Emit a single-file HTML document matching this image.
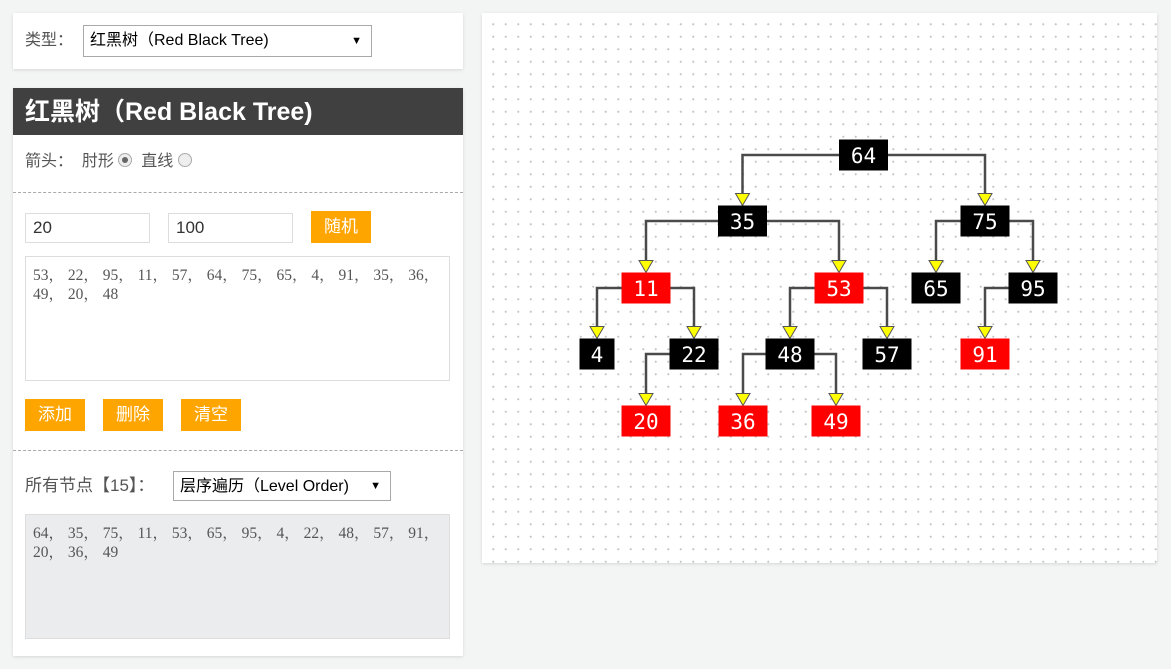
<!DOCTYPE html>
<html><head><meta charset="utf-8"><style>
*{box-sizing:border-box;margin:0;padding:0}
body{width:1171px;height:669px;background:#f3f4f4;font-family:"Liberation Sans","Noto Sans CJK SC",sans-serif;font-size:16px;color:#333;position:relative;overflow:hidden}
.p{position:absolute;background:#fff;box-shadow:0 1px 3px rgba(0,0,0,.12)}
.a{position:absolute}
.sel{position:absolute;border:1px solid #a9a9a9;background:#fff;color:#000;font-size:16px;padding:0 6px;line-height:29px}
.sel b{position:absolute;right:9px;top:0;font-size:11px}
.btn{position:absolute;background:#ffa500;color:#fff;font-size:17px;text-align:center;line-height:32px;height:32px;width:60px}
.inp{position:absolute;border:1px solid #ddd;height:30px;padding-left:7px;line-height:28px;font-size:17px}
.ta{position:absolute;border:1px solid #ddd;font-family:"Liberation Serif","Noto Serif CJK SC",serif;font-size:15.5px;line-height:19px;padding:9px 7px;color:#555}
.dash{position:absolute;left:13px;width:450px;border-top:1px dashed #aaa}
</style></head><body>
<div class="p" style="left:13px;top:13px;width:450px;height:56px">
 <div class="a" style="left:12px;top:17px;font-size:16px;color:#555;line-height:22px">类型：</div>
 <div class="sel" style="left:70px;top:12px;width:289px;height:32px;line-height:30px">红黑树（Red Black Tree)<b>▼</b></div>
</div>
<div class="p" style="left:13px;top:88px;width:450px;height:568px">
 <div class="a" style="left:0;top:0;width:450px;height:47px;background:#404040;color:#fff;font-weight:bold;font-size:25px;line-height:48px;padding-left:12px">红黑树（Red Black Tree)</div>
 <div class="a" style="left:12px;top:63px;color:#555;line-height:22px">箭头：&nbsp; 肘形 <span style="display:inline-block;width:14px;height:14px;border:1px solid #aaa;border-radius:50%;background:#eee;vertical-align:-1px;position:relative"><span style="position:absolute;left:3px;top:3px;width:6px;height:6px;border-radius:50%;background:#666"></span></span> &nbsp;直线 <span style="display:inline-block;width:14px;height:14px;border:1px solid #aaa;border-radius:50%;background:#eee;vertical-align:-1px"></span></div>
 <div class="inp" style="left:12px;top:125px;width:125px">20</div>
 <div class="inp" style="left:155px;top:125px;width:125px">100</div>
 <div class="btn" style="left:298px;top:123px">随机</div>
 <div class="ta" style="left:12px;top:168px;width:425px;height:125px">53， 22， 95， 11， 57， 64， 75， 65， 4， 91， 35， 36， 49， 20， 48</div>
 <div class="btn" style="left:12px;top:311px">添加</div>
 <div class="btn" style="left:90px;top:311px">删除</div>
 <div class="btn" style="left:168px;top:311px">清空</div>
 <div class="a" style="left:12px;top:387px;color:#555;font-size:17px;line-height:22px">所有节点【15】：</div>
 <div class="sel" style="left:160px;top:383px;width:218px;height:30px;line-height:29px">层序遍历（Level Order)<b>▼</b></div>
 <div class="ta" style="left:12px;top:426px;width:425px;height:125px;background:#ebecee">64， 35， 75， 11， 53， 65， 95， 4， 22， 48， 57， 91， 20， 36， 49</div>
</div>
<div class="dash" style="top:192px"></div>
<div class="dash" style="top:450px"></div>
<div class="p" style="left:482px;top:13px;width:675px;height:550px;background-color:#fff;background-image:radial-gradient(circle,#c4c4c4 0.9px,transparent 1.2px);background-size:12.5px 12.5px;background-position:5px 5px"></div>
<svg class="a" style="left:0;top:0" width="1171" height="669">
<g fill="none" stroke="#4a4a4a" stroke-width="2.5">
<path d="M839,155H742.5V193.5"/><path d="M888,155H985V193.5"/>
<path d="M718,221H646V260.5"/><path d="M767,221H839V260.5"/>
<path d="M960.5,221H936V260.5"/><path d="M1009.5,221H1033V260.5"/>
<path d="M621.5,288H597V326.5"/><path d="M670.5,288H694V326.5"/>
<path d="M814.5,288H790V326.5"/><path d="M863.5,288H887V326.5"/>
<path d="M1008.5,288H985V326.5"/>
<path d="M669.5,354H646V393.5"/>
<path d="M765.5,354H743V393.5"/><path d="M814.5,354H836V393.5"/>
</g>
<g fill="#ffff00" stroke="#555" stroke-width="1">
<polygon points="735.5,193.5 749.5,193.5 742.5,205.5"/><polygon points="978,193.5 992,193.5 985,205.5"/>
<polygon points="639,260.5 653,260.5 646,272.5"/><polygon points="832,260.5 846,260.5 839,272.5"/>
<polygon points="929,260.5 943,260.5 936,272.5"/><polygon points="1026,260.5 1040,260.5 1033,272.5"/>
<polygon points="590,326.5 604,326.5 597,338.5"/><polygon points="687,326.5 701,326.5 694,338.5"/>
<polygon points="783,326.5 797,326.5 790,338.5"/><polygon points="880,326.5 894,326.5 887,338.5"/>
<polygon points="978,326.5 992,326.5 985,338.5"/>
<polygon points="639,393.5 653,393.5 646,405.5"/>
<polygon points="736,393.5 750,393.5 743,405.5"/><polygon points="829,393.5 843,393.5 836,405.5"/>
</g>
<g font-family="DejaVu Sans Mono,monospace" font-size="21" fill="#fff" text-anchor="middle">
<rect x="839" y="139.5" width="49" height="31" fill="#000"/><text x="863.5" y="163">64</text>
<rect x="718" y="205.5" width="49" height="31" fill="#000"/><text x="742.5" y="229">35</text>
<rect x="960.5" y="205.5" width="49" height="31" fill="#000"/><text x="985" y="229">75</text>
<rect x="621.5" y="272.5" width="49" height="31" fill="#f00"/><text x="646" y="296">11</text>
<rect x="814.5" y="272.5" width="49" height="31" fill="#f00"/><text x="839" y="296">53</text>
<rect x="911.5" y="272.5" width="49" height="31" fill="#000"/><text x="936" y="296">65</text>
<rect x="1008.5" y="272.5" width="49" height="31" fill="#000"/><text x="1033" y="296">95</text>
<rect x="579.5" y="338.5" width="35" height="31" fill="#000"/><text x="597" y="362">4</text>
<rect x="669.5" y="338.5" width="49" height="31" fill="#000"/><text x="694" y="362">22</text>
<rect x="765.5" y="338.5" width="49" height="31" fill="#000"/><text x="790" y="362">48</text>
<rect x="862.5" y="338.5" width="49" height="31" fill="#000"/><text x="887" y="362">57</text>
<rect x="960.5" y="338.5" width="49" height="31" fill="#f00"/><text x="985" y="362">91</text>
<rect x="621.5" y="405.5" width="49" height="31" fill="#f00"/><text x="646" y="429">20</text>
<rect x="718.5" y="405.5" width="49" height="31" fill="#f00"/><text x="743" y="429">36</text>
<rect x="811.5" y="405.5" width="49" height="31" fill="#f00"/><text x="836" y="429">49</text>
</g>
</svg>
</body></html>
